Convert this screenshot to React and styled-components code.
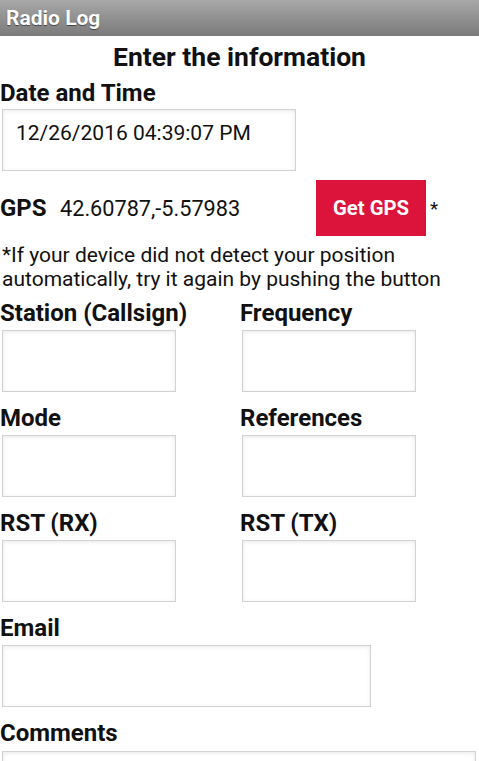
import React from "react";
import styled, { createGlobalStyle } from "styled-components";

const GlobalStyle = createGlobalStyle`
  html, body {
    margin: 0;
    padding: 0;
    background: #fff;
  }
  body {
    font-family: Roboto, "Liberation Sans", sans-serif;
    color: #111;
  }
`;

const Page = styled.div`
  width: 479px;
  height: 761px;
  overflow: hidden;
`;

const TitleBar = styled.div`
  height: 36px;
  display: flex;
  align-items: center;
  padding-left: 6px;
  background: linear-gradient(#a8a8a8, #7a7a7a);
  color: #fff;
  font-weight: bold;
  font-size: 21px;
  text-shadow: 0 1px 1px #444;
`;

const Content = styled.div`
  padding: 0;
`;

const Heading = styled.h1`
  margin: 6px 0 8px;
  font-size: 26.5px;
  line-height: 30px;
  font-weight: bold;
  text-align: center;
`;

const Label = styled.div`
  font-size: 24px;
  line-height: 27px;
  font-weight: bold;
  margin-bottom: ${(p) => p.$gap || 3}px;
`;

const Field = styled.input`
  display: block;
  box-sizing: border-box;
  width: ${(p) => p.$width}px;
  height: 62px;
  margin: 0 0 0 2px;
  padding: 0 0 14px 13px;
  border: 1px solid #d2d2d2;
  box-shadow: inset 0 1px 4px rgba(0, 0, 0, 0.09);
  background: #fff;
  font-family: Roboto, "Liberation Sans", sans-serif;
  font-size: 21px;
  color: #111;
  outline: none;
`;

const GpsRow = styled.div`
  display: flex;
  align-items: center;
  margin-top: 9px;
  height: 56px;
`;

const GpsLabel = styled.span`
  font-size: 24px;
  font-weight: bold;
  width: 60px;
`;

const GpsValue = styled.span`
  font-size: 21.7px;
  width: 256px;
`;

const GpsButton = styled.button`
  width: 110px;
  height: 56px;
  border: none;
  background: #dc143c;
  color: #fff;
  font-family: Roboto, "Liberation Sans", sans-serif;
  font-weight: bold;
  font-size: 20.3px;
  padding: 0;
`;

const Star = styled.span`
  font-size: 19px;
  margin-left: 4px;
`;

const Note = styled.p`
  margin: 7px 0 9px 2px;
  font-size: 21px;
  line-height: 24px;
`;

const Grid = styled.div`
  display: grid;
  grid-template-columns: 240px 1fr;
`;

const Cell = styled.div`
  margin-bottom: 13px;
`;

const Comments = styled.textarea`
  display: block;
  box-sizing: border-box;
  width: 474px;
  height: 90px;
  margin: 0 0 0 2px;
  border: 1px solid #d2d2d2;
  box-shadow: inset 0 1px 4px rgba(0, 0, 0, 0.09);
  resize: none;
  outline: none;
`;

const pairs = [
  ["Station (Callsign)", "Frequency"],
  ["Mode", "References"],
  ["RST (RX)", "RST (TX)"],
];

export default function App() {
  return (
    <Page>
      <GlobalStyle />
      <TitleBar>Radio Log</TitleBar>
      <Content>
        <Heading>Enter the information</Heading>
        <Label $gap={2}>Date and Time</Label>
        <Field $width={294} readOnly value="12/26/2016 04:39:07 PM" />
        <GpsRow>
          <GpsLabel>GPS</GpsLabel>
          <GpsValue>42.60787,-5.57983</GpsValue>
          <GpsButton>Get GPS</GpsButton>
          <Star>*</Star>
        </GpsRow>
        <Note>
          *If your device did not detect your position automatically, try it
          again by pushing the button
        </Note>
        <Grid>
          {pairs.flat().map((name) => (
            <Cell key={name}>
              <Label>{name}</Label>
              <Field $width={174} readOnly />
            </Cell>
          ))}
        </Grid>
        <Cell>
          <Label>Email</Label>
          <Field $width={369} readOnly />
        </Cell>
        <Label $gap={4}>Comments</Label>
        <Comments readOnly />
      </Content>
    </Page>
  );
}
